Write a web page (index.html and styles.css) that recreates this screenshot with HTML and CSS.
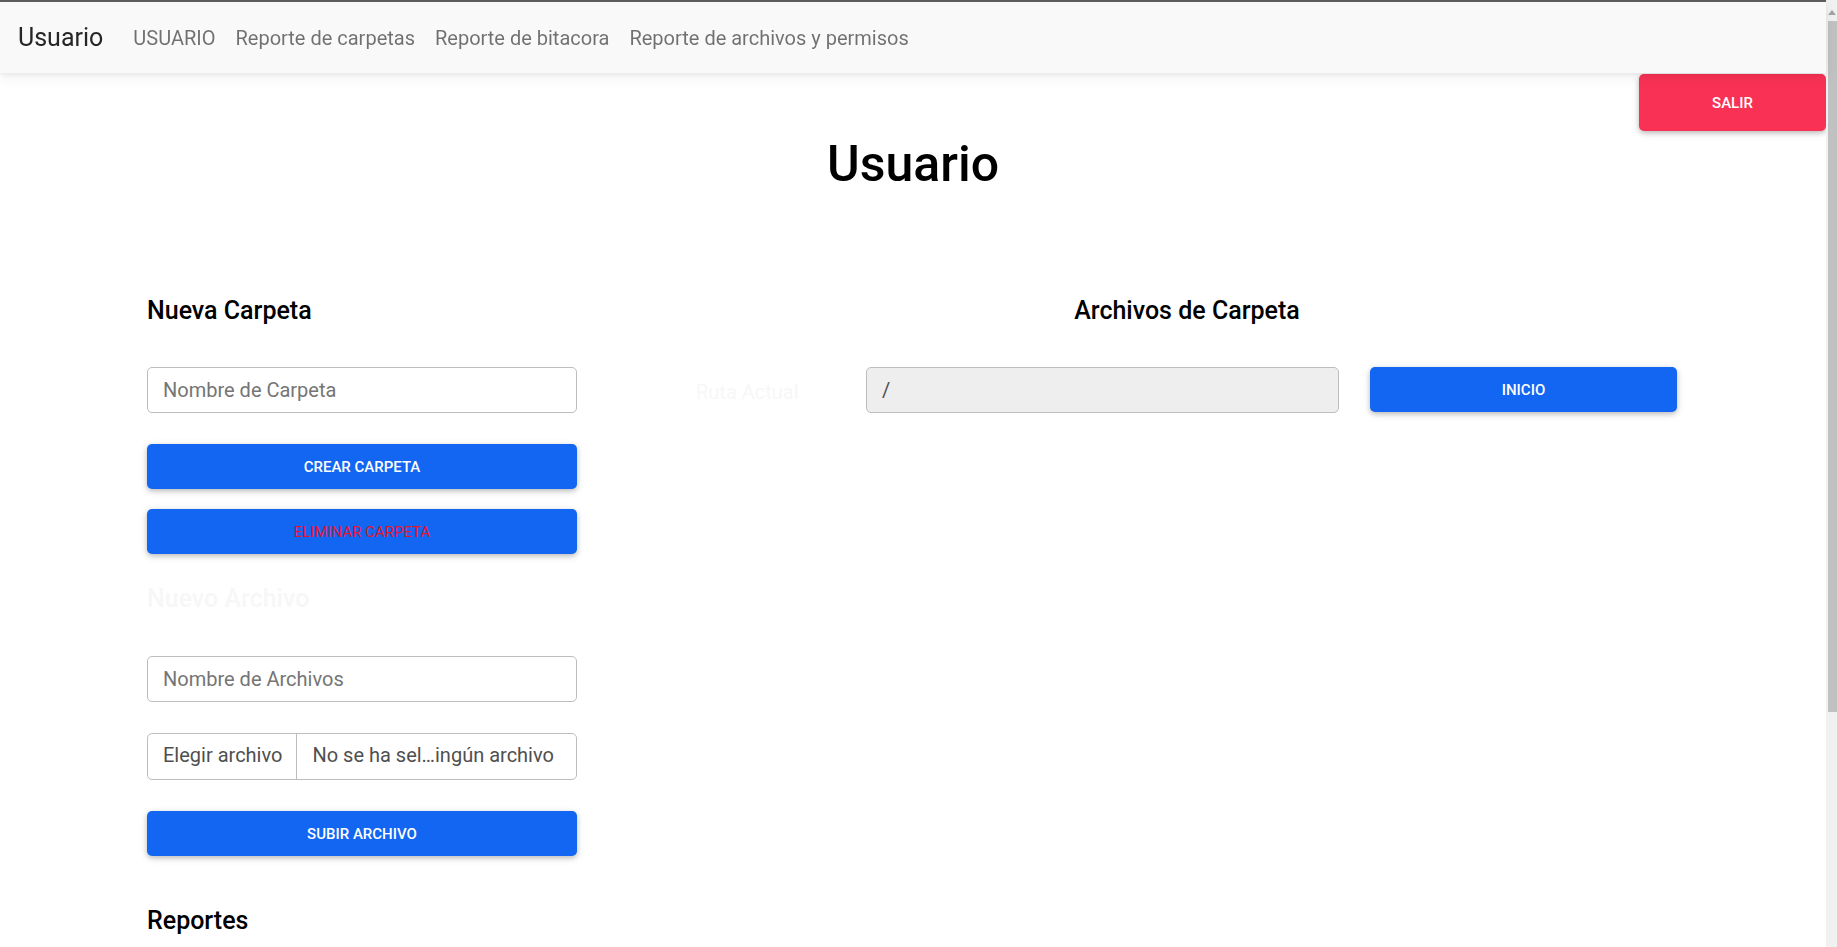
FILE: index.html
```html
<!DOCTYPE html>
<html lang="es">
<head>
<meta charset="utf-8">
<title>Usuario</title>
<link rel="stylesheet" href="styles.css">
</head>
<body>
<div class="page">
  <nav class="navbar">
    <a class="brand" href="#">Usuario</a>
    <ul class="nav">
      <li><a class="nav-link" href="#">USUARIO</a></li>
      <li><a class="nav-link" href="#">Reporte de carpetas</a></li>
      <li><a class="nav-link" href="#">Reporte de bitacora</a></li>
      <li><a class="nav-link" href="#">Reporte de archivos y permisos</a></li>
    </ul>
  </nav>

  <div class="exit-row">
    <button class="btn btn-danger btn-exit">Salir</button>
  </div>

  <h1 class="title">Usuario</h1>

  <div class="content">
    <section class="left">
      <h5 class="heading">Nueva Carpeta</h5>
      <input class="form-control first-input" type="text" placeholder="Nombre de Carpeta">
      <button class="btn btn-primary btn-create">Crear Carpeta</button>
      <button class="btn btn-primary btn-delete">Eliminar Carpeta</button>
      <h5 class="heading faint heading-file">Nuevo Archivo</h5>
      <input class="form-control file-name-input" type="text" placeholder="Nombre de Archivos">
      <div class="file-input">
        <span class="file-btn">Elegir archivo</span>
        <span class="file-name">No se ha sel…ingún archivo</span>
      </div>
      <button class="btn btn-primary btn-upload">Subir Archivo</button>
      <h5 class="heading heading-reports">Reportes</h5>
    </section>

    <section class="right">
      <h5 class="heading heading-center">Archivos de Carpeta</h5>
      <div class="path-row">
        <label class="path-label faint">Ruta Actual</label>
        <input class="form-control path-input" type="text" value="/" readonly>
        <button class="btn btn-primary btn-home">Inicio</button>
      </div>
    </section>
  </div>
</div>

<div class="scrollbar">
  <span class="scroll-arrow"></span>
  <span class="scroll-thumb"></span>
</div>
</body>
</html>
```

FILE: styles.css
```css
* {
  box-sizing: border-box;
}

html, body {
  margin: 0;
  padding: 0;
  overflow: hidden;
  background: #ffffff;
}

body {
  font-family: Roboto, "Liberation Sans", Arial, sans-serif;
  color: #4f4f4f;
}

.page {
  width: calc(100% - 11px);
  min-height: 100vh;
}

/* NAVBAR */
.navbar {
  height: 73px;
  border-top: 2px solid #5c5c5c;
  background: #f9f9f9;
  display: flex;
  align-items: center;
  padding-left: 18px;
  box-shadow: 0 4px 12px 0 rgba(0, 0, 0, 0.07), 0 2px 4px rgba(0, 0, 0, 0.05);
  position: relative;
  z-index: 2;
}

.brand {
  font-size: 25px;
  line-height: 36px;
  color: #262626;
  text-decoration: none;
  margin-right: 20px;
}

.nav {
  list-style: none;
  margin: 0;
  padding: 0;
  display: flex;
}

.nav-link {
  display: block;
  padding: 0 10px;
  font-size: 20px;
  line-height: 30px;
  color: rgba(0, 0, 0, 0.55);
  text-decoration: none;
}

/* BUTTONS */
.btn {
  font-family: Roboto, "Liberation Sans", Arial, sans-serif;
  font-size: 15px;
  font-weight: 500;
  line-height: 22px;
  text-transform: uppercase;
  color: #ffffff;
  border: 0;
  border-radius: 5px;
  display: flex;
  align-items: center;
  justify-content: center;
  cursor: pointer;
  box-shadow: 0 2px 5px 0 rgba(0, 0, 0, 0.2), 0 2px 10px 0 rgba(0, 0, 0, 0.1);
  padding: 0;
}

.btn-primary {
  background: #1266f1;
  width: 430px;
  height: 45px;
}

.btn-danger {
  background: #f93154;
}

.exit-row {
  display: flex;
  justify-content: flex-end;
  margin-top: 1px;
}

.btn-exit {
  width: 187px;
  height: 57px;
}

/* TITLE */
.title {
  margin: 3px 0 0;
  font-size: 50px;
  line-height: 60px;
  font-weight: 500;
  color: #000000;
  text-align: center;
}

/* CONTENT */
.content {
  display: flex;
  gap: 90px;
  margin-top: 102px;
  padding-left: 147px;
}

.left {
  width: 430px;
  display: flex;
  flex-direction: column;
}

.right {
  width: 1040px;
  display: flex;
  flex-direction: column;
}

.heading {
  margin: 0;
  font-size: 25px;
  line-height: 30px;
  font-weight: 500;
  color: #000000;
}

.heading-center {
  text-align: center;
}

.faint {
  color: #f7f7f7;
}

.heading-file {
  margin-top: 30px;
}

.heading-reports {
  margin-top: 50px;
}

.form-control {
  font-family: Roboto, "Liberation Sans", Arial, sans-serif;
  width: 430px;
  height: 46px;
  font-size: 20px;
  line-height: 30px;
  padding: 7px 15px;
  color: #4f4f4f;
  background: #ffffff;
  border: 1px solid #bdbdbd;
  border-radius: 5px;
  outline: none;
}

.form-control::placeholder {
  color: #757575;
  opacity: 1;
}

.first-input {
  margin-top: 41px;
}

.btn-create {
  margin-top: 31px;
}

.btn-delete {
  margin-top: 20px;
  color: #e2152f;
  font-weight: 400;
}

.file-name-input {
  margin-top: 42px;
}

.file-input {
  margin-top: 31px;
  height: 47px;
  display: flex;
  align-items: stretch;
  border: 1px solid #bdbdbd;
  border-radius: 5px;
  font-size: 20px;
  line-height: 30px;
  color: #4f4f4f;
  background: #ffffff;
}

.file-btn {
  display: flex;
  align-items: center;
  padding: 0 14px 3px 15px;
  border-right: 1px solid #bdbdbd;
}

.file-name {
  display: flex;
  align-items: center;
  padding: 0 0 3px 15px;
}

.btn-upload {
  margin-top: 31px;
}

/* RIGHT PATH ROW */
.path-row {
  display: flex;
  align-items: center;
  margin-top: 41px;
}

.path-label {
  width: 199px;
  padding-left: 29px;
  padding-top: 4px;
  font-size: 20px;
  line-height: 30px;
}

.path-input {
  width: 473px;
  background: #eeeeee;
}

.btn-home {
  width: 307px;
  margin-left: 31px;
  align-self: flex-start;
}

/* SCROLLBAR */
.scrollbar {
  position: fixed;
  top: 0;
  right: 0;
  width: 11px;
  height: 100%;
  background: #f1f1f1;
}

.scroll-arrow {
  position: absolute;
  top: 10px;
  right: 1px;
  width: 0;
  height: 0;
  border-left: 4px solid transparent;
  border-right: 4px solid transparent;
  border-bottom: 5px solid #a3a3a3;
}

.scroll-thumb {
  position: absolute;
  top: 21px;
  right: 0;
  width: 9px;
  height: 691px;
  background: #c1c1c1;
}
```
